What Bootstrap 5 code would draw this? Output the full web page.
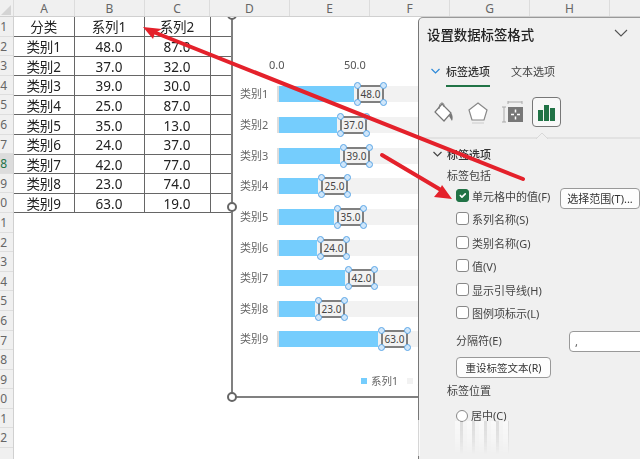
<!DOCTYPE html>
<html lang="zh-CN">
<head>
<meta charset="utf-8">
<title>设置数据标签格式</title>
<link rel="stylesheet" href="https://cdn.jsdelivr.net/npm/bootstrap@5.3.0/dist/css/bootstrap.min.css">
<style>
html,body{width:640px;height:459px;overflow:hidden;margin:0;background:#fff}
body{font-family:"Noto Sans","Noto Sans CJK SC",sans-serif;color:#333}
.xl-app{width:640px;height:459px;position:relative;overflow:hidden;filter:blur(.35px)}
.col-heads{height:17px;background:#f0f0f0;border-bottom:1px solid #d0d0d0;font-size:12px;color:#666;line-height:17px;position:relative;z-index:2}
.col-heads>div{text-align:center;border-right:1px solid #dcdcdc;flex:none}
.ch-corner{width:14px;position:relative}
.ch-corner::after{content:"";position:absolute;right:2px;bottom:1px;border-style:solid;border-width:0 0 10px 10px;border-color:transparent transparent #d4d4d4 transparent}
.ch-a{width:61px}.ch-b{width:70px}.ch-c{width:65px}.ch-d{width:80px}.ch-e{width:80px}
.row-heads{width:14px;flex:none;background:#f0f0f0;border-right:1px solid #d0d0d0;height:442px;overflow:hidden}
.row-num{height:19.6px;line-height:19.6px;font-size:12px;color:#666;text-align:right;padding-right:6px;border-bottom:1px solid #dedede}
.row-num.is-sel{background:#dcdcdc;color:#217346}
.xl-table{width:217px;table-layout:fixed;border-collapse:collapse;font-size:13.5px;color:#222;margin:0;align-self:flex-start}
.xl-table td{height:19.6px;padding:1.5px 0 0;border:1px solid #666;text-align:center;line-height:16px;background:#fff;overflow:hidden}
.xl-table tr td:first-child{border-left:0}
.xl-table tr:first-child td{border-top:0;padding-top:0;line-height:18px}
.w-a{width:60px}.w-b{width:70px}.w-c{width:66px}.w-d{width:21px}
.chart-box{position:absolute;left:231px;top:17px;width:188px;height:381px;background:#fff;border-left:2px solid #808080;border-bottom:2px solid #808080}
.grip{position:absolute;width:10px;height:10px;border-radius:50%;background:#fff;border:2px solid #666}
.grip-1{left:227px;top:10px}.grip-2{left:227px;top:202px}.grip-3{left:227px;top:392px}
.axis-row{height:62px;padding-left:36px;font-size:11px;color:#555;padding-top:40px;line-height:15px}
.axis-tick{width:77px}
.plot{position:relative}
.bar-row{height:30.65px}
.cat-name{width:45px;flex:none;font-size:11px;color:#666;padding-left:7px;white-space:nowrap;line-height:16px}
.bar-track{flex:1;height:16px;background:#f2f2f2;border-left:1px solid #dcdcdc;box-shadow:-1px 0 0 #ddd}
.bar-fill{height:16px;background:#75cdfd;flex:none}
.data-tag{position:relative;width:27px;height:18px;margin-left:3px;margin-top:-1px;flex:none;background:#f2f2f2;border:2px solid #808080;font-size:10px;color:#444;text-align:center;line-height:14px}
.tag-h{position:absolute;width:7px;height:7px;border-radius:50%;background:#cfe6fa;border:1px solid #5aa5e6}
.h-tl{left:-5px;top:-5px}.h-tr{right:-5px;top:-5px}.h-bl{left:-5px;bottom:-5px}.h-br{right:-5px;bottom:-5px}
.chart-legend{font-size:10.5px;color:#666;padding:18px 0 0 128px;line-height:16px;white-space:nowrap}
.lg-sw{width:6px;height:6px;flex:none}
.sw-a{background:#75cdfd}.sw-b{background:#f2f2f2;margin-left:5px}
.fmt-pane{position:absolute;left:418px;top:17px;width:222px;height:442px;background:#f0f0f0;border-left:1px solid #777;border-top:1px solid #999;border-top-left-radius:5px;font-size:11px;color:#444;overflow:hidden}
.pane-title{font-size:13.4px;font-weight:500;color:#222;padding:7px 12px 0 8px;height:44px;line-height:20px;white-space:nowrap}
.pane-tabs{height:32px;padding-left:12px;gap:21px;font-size:11px;line-height:16px}
.tab-on{font-weight:500;color:#333;border-bottom:2px solid #217346;height:25px;padding:2px 0 0;width:44px;margin-left:3px;white-space:nowrap}
.tab-off{padding-top:2px;color:#444;white-space:nowrap}
.tab-chev{margin-top:6px;margin-right:-18px}
.icon-row{padding:3px 0 0 13px;gap:13px;height:45px;border-bottom:2px solid #e2e2e2;position:relative}
.ic-sel{width:29px;height:30px;border:1px solid #777;border-radius:4px;background:#f8f8f8;margin-left:-5px}
.ic-notch{position:absolute;left:117px;bottom:-2px;width:12px;height:7px}
.sec-head{font-weight:500;padding:8px 0 0 14px;height:28px;line-height:16px;color:#333;gap:5px}
.sec-sub{padding-left:28px;height:22px;line-height:18px;white-space:nowrap}
.chk-row{height:23.4px;padding-left:37px;gap:3px;white-space:nowrap;line-height:16px}
.chk-row .form-check-input{width:13px;height:13px;margin:0;flex:none;background-color:#fff;border:1px solid #888;border-radius:3px;box-shadow:none}
.chk-row .form-check-input:checked{background-color:#217346;border-color:#217346}
.chk-row .form-check-input[type=radio]{border-radius:50%;width:12px;height:12px}
.chk-lbl{color:#444}
.pick-btn{--bs-btn-padding-x:6px;--bs-btn-padding-y:0;--bs-btn-font-size:11px;--bs-btn-bg:#fdfdfd;--bs-btn-border-color:#999;--bs-btn-color:#333;--bs-btn-border-radius:4px;--bs-btn-hover-bg:#fdfdfd;--bs-btn-hover-border-color:#999;--bs-btn-hover-color:#333;height:21px;line-height:18px;white-space:nowrap}
.pick-range{margin-left:auto;margin-top:-1px;width:80px;flex:none}
.sep-row{height:30px;margin-top:-2px;padding-left:37px;padding-top:4px}
.sep-name{width:113px;flex:none;line-height:19px;white-space:nowrap}
.sep-select{width:80px;height:21px;background:#fff;border:1px solid #999;border-radius:4px;padding-left:5px;line-height:14px;flex:none;color:#555}
.reset-wrap{padding-left:37px;height:25px}
.reset-btn{width:95px;--bs-btn-font-size:10.5px;--bs-btn-padding-x:0;height:21px}
.smudge{position:absolute;left:455px;top:421px;width:54px;height:34px;background:repeating-linear-gradient(90deg,rgba(255,255,255,.6) 0 5px,rgba(150,150,150,.22) 5px 8px,rgba(255,255,255,.35) 8px 12px);-webkit-mask-image:linear-gradient(180deg,#000 0,rgba(0,0,0,.6) 55%,transparent 100%);mask-image:linear-gradient(180deg,#000 0,rgba(0,0,0,.6) 55%,transparent 100%)}
.smudge-b{position:absolute;left:416px;top:420px;width:4px;height:36px;background:rgba(255,255,255,.7)}
.red-arrows{position:absolute;left:0;top:0;width:640px;height:459px;pointer-events:none;z-index:3}
</style>
</head>
<body>
<div class="xl-app">
  <div class="col-heads d-flex">
    <div class="ch-corner"></div><div class="ch-a">A</div><div class="ch-b">B</div><div class="ch-c">C</div><div class="ch-d">D</div><div class="ch-e">E</div><div class="ch-e">F</div><div class="ch-e">G</div><div class="ch-e">H</div>
  </div>
  <div class="d-flex">
    <div class="row-heads">
      <div class="row-num">1</div><div class="row-num">2</div><div class="row-num">3</div><div class="row-num">4</div><div class="row-num">5</div><div class="row-num">6</div><div class="row-num">7</div><div class="row-num is-sel">8</div><div class="row-num">9</div><div class="row-num">0</div><div class="row-num">1</div><div class="row-num">2</div><div class="row-num">3</div><div class="row-num">4</div><div class="row-num">5</div><div class="row-num">6</div><div class="row-num">7</div><div class="row-num">8</div><div class="row-num">9</div><div class="row-num">0</div><div class="row-num">1</div><div class="row-num">2</div>
    </div>
    <table class="xl-table">
      <colgroup><col class="w-a"><col class="w-b"><col class="w-c"><col class="w-d"></colgroup>
      <tr><td>分类</td><td>系列1</td><td>系列2</td><td></td></tr>
      <tr><td>类别1</td><td>48.0</td><td>87.0</td><td></td></tr>
      <tr><td>类别2</td><td>37.0</td><td>32.0</td><td></td></tr>
      <tr><td>类别3</td><td>39.0</td><td>30.0</td><td></td></tr>
      <tr><td>类别4</td><td>25.0</td><td>87.0</td><td></td></tr>
      <tr><td>类别5</td><td>35.0</td><td>13.0</td><td></td></tr>
      <tr><td>类别6</td><td>24.0</td><td>37.0</td><td></td></tr>
      <tr><td>类别7</td><td>42.0</td><td>77.0</td><td></td></tr>
      <tr><td>类别8</td><td>23.0</td><td>74.0</td><td></td></tr>
      <tr><td>类别9</td><td>63.0</td><td>19.0</td><td></td></tr>
    </table>
  </div>

  <div class="chart-box">
    <div class="axis-row d-flex"><div class="axis-tick">0.0</div><div class="axis-tick">50.0</div></div>
    <div class="plot">
      <div class="bar-row d-flex align-items-center"><div class="cat-name">类别1</div><div class="bar-track d-flex"><div class="bar-fill" style="width:75px"></div><div class="data-tag">48.0<i class="tag-h h-tl"></i><i class="tag-h h-tr"></i><i class="tag-h h-bl"></i><i class="tag-h h-br"></i></div></div></div>
      <div class="bar-row d-flex align-items-center"><div class="cat-name">类别2</div><div class="bar-track d-flex"><div class="bar-fill" style="width:58px"></div><div class="data-tag">37.0<i class="tag-h h-tl"></i><i class="tag-h h-tr"></i><i class="tag-h h-bl"></i><i class="tag-h h-br"></i></div></div></div>
      <div class="bar-row d-flex align-items-center"><div class="cat-name">类别3</div><div class="bar-track d-flex"><div class="bar-fill" style="width:61px"></div><div class="data-tag">39.0<i class="tag-h h-tl"></i><i class="tag-h h-tr"></i><i class="tag-h h-bl"></i><i class="tag-h h-br"></i></div></div></div>
      <div class="bar-row d-flex align-items-center"><div class="cat-name">类别4</div><div class="bar-track d-flex"><div class="bar-fill" style="width:39px"></div><div class="data-tag">25.0<i class="tag-h h-tl"></i><i class="tag-h h-tr"></i><i class="tag-h h-bl"></i><i class="tag-h h-br"></i></div></div></div>
      <div class="bar-row d-flex align-items-center"><div class="cat-name">类别5</div><div class="bar-track d-flex"><div class="bar-fill" style="width:55px"></div><div class="data-tag">35.0<i class="tag-h h-tl"></i><i class="tag-h h-tr"></i><i class="tag-h h-bl"></i><i class="tag-h h-br"></i></div></div></div>
      <div class="bar-row d-flex align-items-center"><div class="cat-name">类别6</div><div class="bar-track d-flex"><div class="bar-fill" style="width:38px"></div><div class="data-tag">24.0<i class="tag-h h-tl"></i><i class="tag-h h-tr"></i><i class="tag-h h-bl"></i><i class="tag-h h-br"></i></div></div></div>
      <div class="bar-row d-flex align-items-center"><div class="cat-name">类别7</div><div class="bar-track d-flex"><div class="bar-fill" style="width:66px"></div><div class="data-tag">42.0<i class="tag-h h-tl"></i><i class="tag-h h-tr"></i><i class="tag-h h-bl"></i><i class="tag-h h-br"></i></div></div></div>
      <div class="bar-row d-flex align-items-center"><div class="cat-name">类别8</div><div class="bar-track d-flex"><div class="bar-fill" style="width:36px"></div><div class="data-tag">23.0<i class="tag-h h-tl"></i><i class="tag-h h-tr"></i><i class="tag-h h-bl"></i><i class="tag-h h-br"></i></div></div></div>
      <div class="bar-row d-flex align-items-center"><div class="cat-name">类别9</div><div class="bar-track d-flex"><div class="bar-fill" style="width:99px"></div><div class="data-tag">63.0<i class="tag-h h-tl"></i><i class="tag-h h-tr"></i><i class="tag-h h-bl"></i><i class="tag-h h-br"></i></div></div></div>
    </div>
    <div class="chart-legend d-flex align-items-center gap-1"><span class="lg-sw sw-a"></span><span>系列1</span><span class="lg-sw sw-b"></span><span>系列2</span></div>
  </div>
  <i class="grip grip-1"></i><i class="grip grip-2"></i><i class="grip grip-3"></i>

  <aside class="fmt-pane">
    <div class="pane-title d-flex justify-content-between">
      <span>设置数据标签格式</span>
      <svg width="14" height="8" viewBox="0 0 14 8" class="mt-1" fill="none" stroke="#555" stroke-width="1.1"><path d="M1 1l6 6 6-6"/></svg>
    </div>
    <div class="pane-tabs d-flex">
      <svg class="tab-chev" width="9" height="6" viewBox="0 0 9 6" fill="none" stroke="#2b88d8" stroke-width="1.2"><path d="M.5 1l4 4 4-4"/></svg>
      <div class="tab-on">标签选项</div>
      <div class="tab-off">文本选项</div>
    </div>
    <div class="icon-row d-flex align-items-start">
      <svg width="22" height="24" viewBox="0 0 22 24" class="mt-1"><path d="M10 3l9 9-7 8-9-9z" fill="#fff" stroke="#777" stroke-width="1.2"/><path d="M7 8c0-3 1-6 3-6s2 2 2 4" fill="none" stroke="#777"/><path d="M19 12c2 2 2 6 1 8-1-2-2-3-3-5z" fill="#777"/></svg>
      <svg width="22" height="24" viewBox="0 0 22 24" class="mt-1"><path d="M11 2l9 7-3 10H5L2 9z" fill="#fff" stroke="#888" stroke-width="1.2"/><path d="M5 22h12" stroke="#ccc"/></svg>
      <svg width="22" height="24" viewBox="0 0 22 24" class="mt-1"><path d="M2 6v15M0 6h4M0 21h4M6 1h14M6 0v3M20 0v3" stroke="#aaa" fill="none"/><rect x="6" y="6" width="15" height="15" fill="#777"/><path d="M13.500 8.500v3M13.500 15.500v3M9 13.500h3M15 13.500h3" stroke="#fff" stroke-width="1.500"/></svg>
      <div class="ic-sel d-flex align-items-center justify-content-center">
        <svg width="19" height="19" viewBox="0 0 19 19"><path d="M1 7h5v11H1zM7 2h5v16H7zM13 5h5v13h-5z" fill="#217346"/></svg>
      </div>
      <svg class="ic-notch" viewBox="0 0 12 7"><path d="M0 7l6-6 6 6" fill="#f0f0f0" stroke="#d8d8d8"/></svg>
    </div>
    <div class="sec-head d-flex">
      <svg width="9" height="6" viewBox="0 0 9 6" class="mt-1" fill="none" stroke="#444" stroke-width="1.200"><path d="M.5 1l4 4 4-4"/></svg>
      <span>标签选项</span>
    </div>
    <div class="sec-sub">标签包括</div>
    <div class="chk-row d-flex align-items-start">
      <input class="form-check-input" type="checkbox" checked aria-label="单元格中的值">
      <span class="chk-lbl">单元格中的值(F)</span>
      <button type="button" class="btn pick-btn pick-range">选择范围(T)...</button>
    </div>
    <div class="chk-row d-flex align-items-start"><input class="form-check-input" type="checkbox" aria-label="系列名称"><span class="chk-lbl">系列名称(S)</span></div>
    <div class="chk-row d-flex align-items-start"><input class="form-check-input" type="checkbox" aria-label="类别名称"><span class="chk-lbl">类别名称(G)</span></div>
    <div class="chk-row d-flex align-items-start"><input class="form-check-input" type="checkbox" aria-label="值"><span class="chk-lbl">值(V)</span></div>
    <div class="chk-row d-flex align-items-start"><input class="form-check-input" type="checkbox" aria-label="显示引导线"><span class="chk-lbl">显示引导线(H)</span></div>
    <div class="chk-row d-flex align-items-start"><input class="form-check-input" type="checkbox" aria-label="图例项标示"><span class="chk-lbl">图例项标示(L)</span></div>
    <div class="sep-row d-flex">
      <div class="sep-name">分隔符(E)</div>
      <div class="sep-select d-flex align-items-center justify-content-between"><span>,</span><svg width="6" height="4" viewBox="0 0 6 4" fill="none" stroke="#555"><path d="M0 0l3 3 3-3"/></svg></div>
    </div>
    <div class="reset-wrap"><button type="button" class="btn pick-btn reset-btn">重设标签文本(R)</button></div>
    <div class="sec-sub">标签位置</div>
    <div class="chk-row d-flex align-items-center"><input class="form-check-input" type="radio" aria-label="居中"><span class="chk-lbl">居中(C)</span></div>
  </aside>
  <div class="smudge"></div><div class="smudge-b"></div>

  <svg class="red-arrows" viewBox="0 0 640 459">
    <path d="M156 33L523 179" stroke="#e4212b" stroke-width="4" stroke-linecap="round"/>
    <path d="M143 27L162 29 155 33 153 39z" fill="#e4212b"/>
    <path d="M382 155L441 190" stroke="#e4212b" stroke-width="4" stroke-linecap="round"/>
    <path d="M452 199L434 197 439 191 442 185z" fill="#e4212b"/>
  </svg>
</div>
<script src="https://cdn.jsdelivr.net/npm/bootstrap@5.3.0/dist/js/bootstrap.bundle.min.js"></script>
</body>
</html>
